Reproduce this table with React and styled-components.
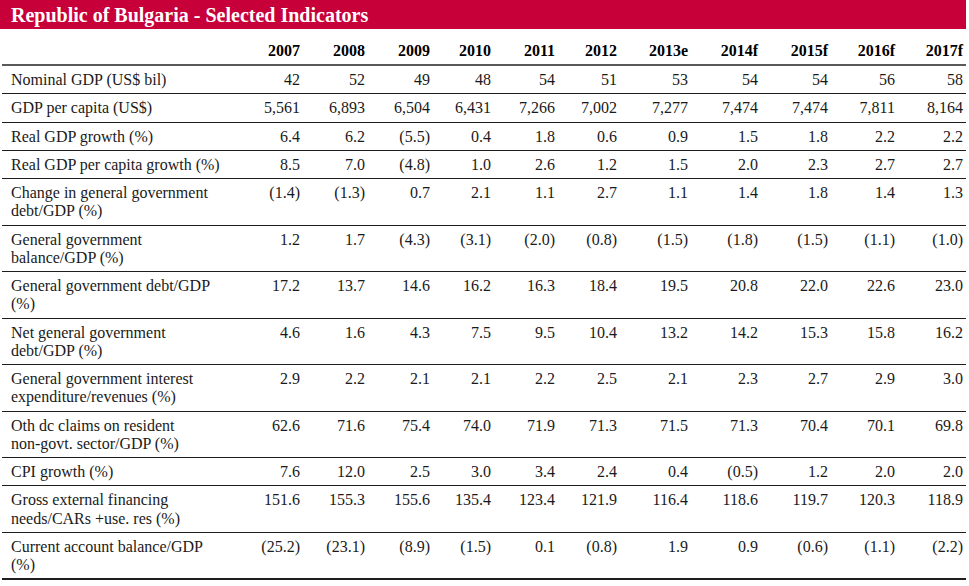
import React from 'react'
import styled, { createGlobalStyle } from 'styled-components';

const years = ['2007', '2008', '2009', '2010', '2011', '2012', '2013e', '2014f', '2015f', '2016f', '2017f'];

// width of each column, label first
const colWidths = [243, 58, 65, 65, 61, 64, 62, 71, 70, 70, 67, 68];

// labels carry their own line breaks, as in the printed table
const rows = [
    ['Nominal GDP (US$ bil)', ['42', '52', '49', '48', '54', '51', '53', '54', '54', '56', '58']],
    ['GDP per capita (US$)', ['5,561', '6,893', '6,504', '6,431', '7,266', '7,002', '7,277', '7,474', '7,474', '7,811', '8,164']],
    ['Real GDP growth (%)', ['6.4', '6.2', '(5.5)', '0.4', '1.8', '0.6', '0.9', '1.5', '1.8', '2.2', '2.2']],
    ['Real GDP per capita growth (%)', ['8.5', '7.0', '(4.8)', '1.0', '2.6', '1.2', '1.5', '2.0', '2.3', '2.7', '2.7']],
    ['Change in general government\ndebt/GDP (%)', ['(1.4)', '(1.3)', '0.7', '2.1', '1.1', '2.7', '1.1', '1.4', '1.8', '1.4', '1.3']],
    ['General government\nbalance/GDP (%)', ['1.2', '1.7', '(4.3)', '(3.1)', '(2.0)', '(0.8)', '(1.5)', '(1.8)', '(1.5)', '(1.1)', '(1.0)']],
    ['General government debt/GDP\n(%)', ['17.2', '13.7', '14.6', '16.2', '16.3', '18.4', '19.5', '20.8', '22.0', '22.6', '23.0']],
    ['Net general government\ndebt/GDP (%)', ['4.6', '1.6', '4.3', '7.5', '9.5', '10.4', '13.2', '14.2', '15.3', '15.8', '16.2']],
    ['General government interest\nexpenditure/revenues (%)', ['2.9', '2.2', '2.1', '2.1', '2.2', '2.5', '2.1', '2.3', '2.7', '2.9', '3.0']],
    ['Oth dc claims on resident\nnon-govt. sector/GDP (%)', ['62.6', '71.6', '75.4', '74.0', '71.9', '71.3', '71.5', '71.3', '70.4', '70.1', '69.8']],
    ['CPI growth (%)', ['7.6', '12.0', '2.5', '3.0', '3.4', '2.4', '0.4', '(0.5)', '1.2', '2.0', '2.0']],
    ['Gross external financing\nneeds/CARs +use. res (%)', ['151.6', '155.3', '155.6', '135.4', '123.4', '121.9', '116.4', '118.6', '119.7', '120.3', '118.9']],
    ['Current account balance/GDP\n(%)', ['(25.2)', '(23.1)', '(8.9)', '(1.5)', '0.1', '(0.8)', '1.9', '0.9', '(0.6)', '(1.1)', '(2.2)']],
];

function App() {
    return (
        <>
            <GlobalStyle />
            <Panel>
                <TitleBar>Republic of Bulgaria - Selected Indicators</TitleBar>
                <Table>
                    <colgroup>
                        {colWidths.map((w, i) => <col key={i} style={{ width: w }} />)}
                    </colgroup>
                    <thead>
                        <tr>
                            <HeadCell />
                            {years.map((y) => <HeadCell key={y} $num>{y}</HeadCell>)}
                        </tr>
                    </thead>
                    <tbody>
                        {rows.map(([label, values]) => (
                            <Row key={label}>
                                <LabelCell>{label}</LabelCell>
                                {values.map((v, i) => <ValueCell key={i}>{v}</ValueCell>)}
                            </Row>
                        ))}
                    </tbody>
                </Table>
            </Panel>
        </>
    )
}

export default App;


const GlobalStyle = createGlobalStyle`
    body {
        margin: 0;
        background: #ffffff;
        font-family: "Liberation Serif", "DejaVu Serif", serif;
        color: #1a1a1a;
    }
`;

const Panel = styled.div`
    width: 966px;
`;

const TitleBar = styled.div`
    height: 29px;
    background-color: #c8003a;
    color: #ffffff;
    font-weight: bold;
    font-size: 20px;
    line-height: 30px;
    padding-left: 11px;
    box-sizing: border-box;
`;

const Table = styled.table`
    width: 964px;
    margin-left: 2px;
    table-layout: fixed;
    border-collapse: collapse;
    font-size: 16px;
    line-height: 18.25px;
`;

const HeadCell = styled.th`
    height: 36px;
    padding: 0 3px 4px 9px;
    vertical-align: bottom;
    text-align: ${(p) => (p.$num ? 'right' : 'left')};
    font-weight: bold;
    color: #000;
    border-bottom: 2px solid #5a5a5a;
    box-sizing: border-box;
`;

const Row = styled.tr`
    border-bottom: 1px solid #1e1e1e;

    &:last-child {
        border-bottom: 2px solid #1e1e1e;
    }
`;

const LabelCell = styled.td`
    padding: 5px 4px 4px 9px;
    vertical-align: top;
    white-space: pre-line;
`;

const ValueCell = styled.td`
    padding: 5px 3px 4px 0;
    vertical-align: top;
    text-align: right;
    white-space: nowrap;
`;
